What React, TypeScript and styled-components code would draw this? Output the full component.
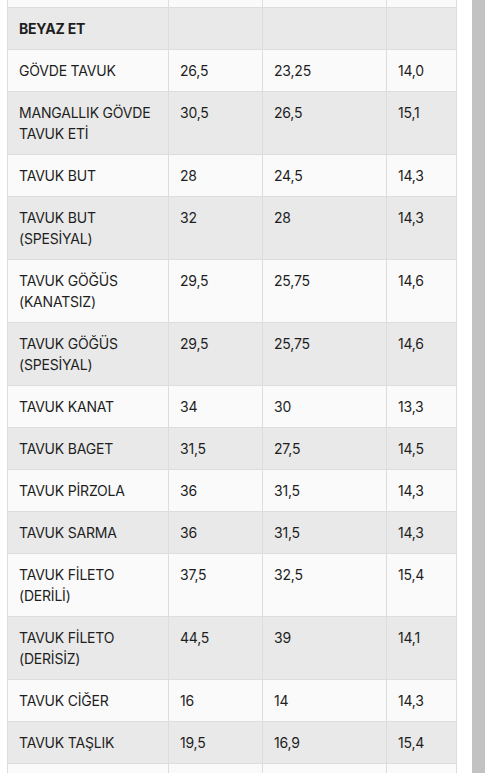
import React from "react";
import styled, { createGlobalStyle } from "styled-components";

const GlobalStyle = createGlobalStyle`
  html, body { margin: 0; padding: 0; background: #ffffff; }
  body { font-family: Inter, "Noto Sans", sans-serif; color: #1e1e1e; }
`;

const Viewport = styled.div`
  display: flex;
  height: 773px;
  overflow: hidden;
  background: #ffffff;
`;

const TableArea = styled.div`
  width: 456px;
  padding-left: 7px;
  box-sizing: border-box;
  flex: none;
`;

const ScrollTrack = styled.div`
  width: 13px;
  margin-left: 16px;
  background: #c2c2c2;
  flex: none;
`;

const Table = styled.table`
  width: 449px;
  border-collapse: collapse;
  table-layout: fixed;
  font-size: 14px;
  line-height: 21px;
  letter-spacing: -0.2px;
`;

const Row = styled.tr<{ $shade: boolean }>`
  background: ${(p) => (p.$shade ? "#e9e9e9" : "#fafafa")};
`;

const Cell = styled.td<{ $bold?: boolean }>`
  border: 1px solid #dddddd;
  padding: 10px 10px 10px 11px;
  vertical-align: top;
  font-weight: ${(p) => (p.$bold ? 700 : 400)};
  color: #1e1e1e;
`;

const StubCell = styled.td`
  border: 1px solid #dddddd;
  border-top: none;
  height: 7px;
  padding: 0;
`;

const rows: [string, string, string, string][] = [
  ["GÖVDE TAVUK", "26,5", "23,25", "14,0"],
  ["MANGALLIK GÖVDE TAVUK ETİ", "30,5", "26,5", "15,1"],
  ["TAVUK BUT", "28", "24,5", "14,3"],
  ["TAVUK BUT (SPESİYAL)", "32", "28", "14,3"],
  ["TAVUK GÖĞÜS (KANATSIZ)", "29,5", "25,75", "14,6"],
  ["TAVUK GÖĞÜS (SPESİYAL)", "29,5", "25,75", "14,6"],
  ["TAVUK KANAT", "34", "30", "13,3"],
  ["TAVUK BAGET", "31,5", "27,5", "14,5"],
  ["TAVUK PİRZOLA", "36", "31,5", "14,3"],
  ["TAVUK SARMA", "36", "31,5", "14,3"],
  ["TAVUK FİLETO (DERİLİ)", "37,5", "32,5", "15,4"],
  ["TAVUK FİLETO (DERİSİZ)", "44,5", "39", "14,1"],
  ["TAVUK CİĞER", "16", "14", "14,3"],
  ["TAVUK TAŞLIK", "19,5", "16,9", "15,4"],
];

export default function App() {
  return (
    <>
      <GlobalStyle />
      <Viewport>
        <TableArea>
          <Table>
            <colgroup>
              <col style={{ width: 161 }} />
              <col style={{ width: 94 }} />
              <col style={{ width: 124 }} />
              <col style={{ width: 70 }} />
            </colgroup>
            <tbody>
              <Row $shade={false}>
                <StubCell />
                <StubCell />
                <StubCell />
                <StubCell />
              </Row>
              <Row $shade={true}>
                <Cell $bold>BEYAZ ET</Cell>
                <Cell />
                <Cell />
                <Cell />
              </Row>
              {rows.map((r, i) => (
                <Row key={i} $shade={i % 2 === 1}>
                  {r.map((c, j) => (
                    <Cell key={j}>{c}</Cell>
                  ))}
                </Row>
              ))}
              <Row $shade={false}>
                <Cell>&nbsp;</Cell>
                <Cell />
                <Cell />
                <Cell />
              </Row>
            </tbody>
          </Table>
        </TableArea>
        <ScrollTrack />
      </Viewport>
    </>
  );
}
